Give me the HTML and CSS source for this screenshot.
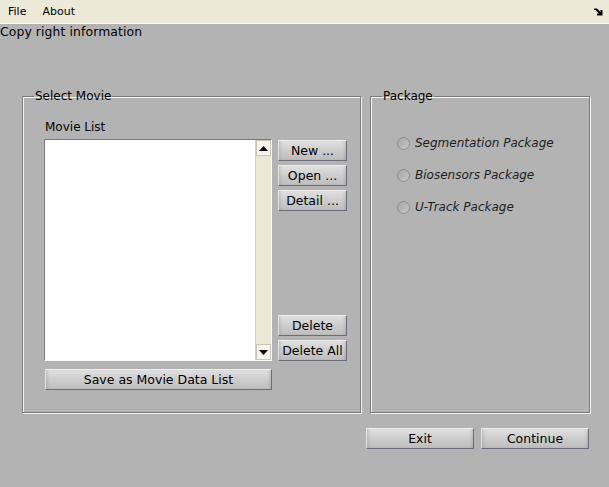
FILE: index.html
```html
<!DOCTYPE html>
<html>
<head>
<meta charset="utf-8">
<link rel="stylesheet" href="styles.css">
</head>
<body>
<div class="menubar">
  <span class="menu">File</span>
  <span class="menu">About</span>
  <span class="spacer"></span>
  <svg class="dock" width="9" height="8" viewBox="0 0 9 8"><path d="M0 0.5 L3 0.5 L6.5 4 L6.5 2 L8.5 2 L8.5 7.5 L3 7.5 L3 5.5 L5 5.5 L1.5 2 L0 2 Z" fill="#000"/></svg>
</div>
<div class="copyright">Copy right information</div>
<div class="panels">
  <fieldset class="panel select-panel">
    <legend>Select Movie</legend>
    <div class="select-body">
      <div class="label">Movie List</div>
      <div class="list-row">
        <div class="listbox">
          <div class="list-area"></div>
          <div class="scrollbar">
            <div class="sb-btn"><svg width="9" height="5" viewBox="0 0 9 5"><path d="M4.5 0 L9 5 L0 5 Z" fill="#000"/></svg></div>
            <div class="sb-track"></div>
            <div class="sb-btn"><svg width="9" height="5" viewBox="0 0 9 5"><path d="M0 0 L9 0 L4.5 5 Z" fill="#000"/></svg></div>
          </div>
        </div>
        <div class="side-buttons">
          <div class="group">
            <button class="btn side">New ...</button>
            <button class="btn side">Open ...</button>
            <button class="btn side">Detail ...</button>
          </div>
          <div class="group">
            <button class="btn side">Delete</button>
            <button class="btn side">Delete All</button>
          </div>
        </div>
      </div>
      <button class="btn save">Save as Movie Data List</button>
    </div>
  </fieldset>
  <fieldset class="panel package-panel">
    <legend>Package</legend>
    <div class="package-body">
      <div class="radio-row"><span class="radio"></span><span class="radio-label">Segmentation Package</span></div>
      <div class="radio-row"><span class="radio"></span><span class="radio-label">Biosensors Package</span></div>
      <div class="radio-row"><span class="radio"></span><span class="radio-label">U-Track Package</span></div>
    </div>
  </fieldset>
</div>
<div class="actions">
  <button class="btn action">Exit</button>
  <button class="btn action">Continue</button>
</div>
</body>
</html>
```
FILE: styles.css
```css
* { box-sizing: border-box; }
html, body {
  margin: 0;
  padding: 0;
}
body {
  width: 609px;
  height: 487px;
  overflow: hidden;
  background: #b3b3b3;
  font-family: "DejaVu Sans", sans-serif;
  font-size: 12px;
  color: #000;
}
.menubar {
  display: flex;
  align-items: center;
  height: 24px;
  background: #ece9d8;
  border-bottom: 1px solid #fbfaf6;
  font-size: 11px;
  padding-left: 8px;
}
.menu { margin-right: 16px; }
.spacer { flex: 1; }
.dock { margin-right: 6px; margin-top: 1px; }
.copyright {
  height: 16px;
  line-height: 16px;
  font-size: 12.4px;
  letter-spacing: 0.1px;
}
.panels {
  display: flex;
  gap: 9px;
  margin-top: 49px;
  padding-left: 22px;
}
.panel {
  margin: 0;
  padding: 0;
  min-width: 0;
  border: 1px solid #7c7c7c;
  box-shadow: inset 1px 1px 0 #f4f4f4, 1px 1px 0 #f4f4f4;
}
.panel legend {
  margin-left: 11px;
  padding: 0 1px 0 1px;
  line-height: 15px;
  font-size: 12px;
}
.select-panel { width: 339px; height: 324px; }
.package-panel { width: 220px; height: 324px; }
.select-body {
  padding: 16px 0 0 21px;
}
.label {
  height: 15px;
  line-height: 15px;
  padding-left: 1px;
}
.list-row {
  display: flex;
  gap: 6px;
  margin-top: 4px;
}
.listbox {
  display: flex;
  width: 228px;
  height: 222px;
  border: 1px solid;
  border-color: #7a7a7a #fafafa #fafafa #7a7a7a;
  background: #fff;
}
.list-area { flex: 1; background: #fff; }
.scrollbar {
  width: 16px;
  display: flex;
  flex-direction: column;
  border-left: 1px solid #d4d0c4;
}
.sb-btn {
  height: 16px;
  display: flex;
  align-items: center;
  justify-content: center;
  background: #f5f3ea;
  border: 1px solid #c9c6b8;
}
.sb-track { flex: 1; background: #ebe8d8; }
.side-buttons {
  display: flex;
  flex-direction: column;
  justify-content: space-between;
  padding-top: 1px;
}
.group {
  display: flex;
  flex-direction: column;
  gap: 4px;
}
.btn {
  font-family: "DejaVu Sans", sans-serif;
  font-size: 12.5px;
  color: #000;
  padding: 0;
  height: 21px;
  border: 1px solid;
  border-color: #eeeeee #6c6c78 #6c6c78 #e4e4e4;
  background: linear-gradient(to bottom, #e0e0e0 0%, #cfcfcf 45%, #bdbdbd 100%);
  box-shadow: inset 3px 0 3px -2px rgba(120,120,120,0.35), inset -3px 0 3px -2px rgba(120,120,120,0.35);
}
.side { width: 69px; }
.save {
  display: block;
  width: 227px;
  height: 21px;
  margin-top: 8px;
  margin-left: 1px;
}
.package-body {
  padding: 23px 0 0 26px;
}
.radio-row {
  display: flex;
  align-items: center;
  height: 32px;
}
.radio {
  width: 13px;
  height: 13px;
  border-radius: 50%;
  border: 1px solid #8e8e8e;
  background: linear-gradient(135deg, #a6a6a6, #c4c4c4);
  margin-right: 5px;
}
.radio-label {
  font-style: italic;
  font-size: 12px;
  color: #1e1e1e;
}
.actions {
  display: flex;
  justify-content: flex-end;
  gap: 7px;
  margin-top: 15px;
  padding-right: 20px;
}
.action { width: 108px; }
```
